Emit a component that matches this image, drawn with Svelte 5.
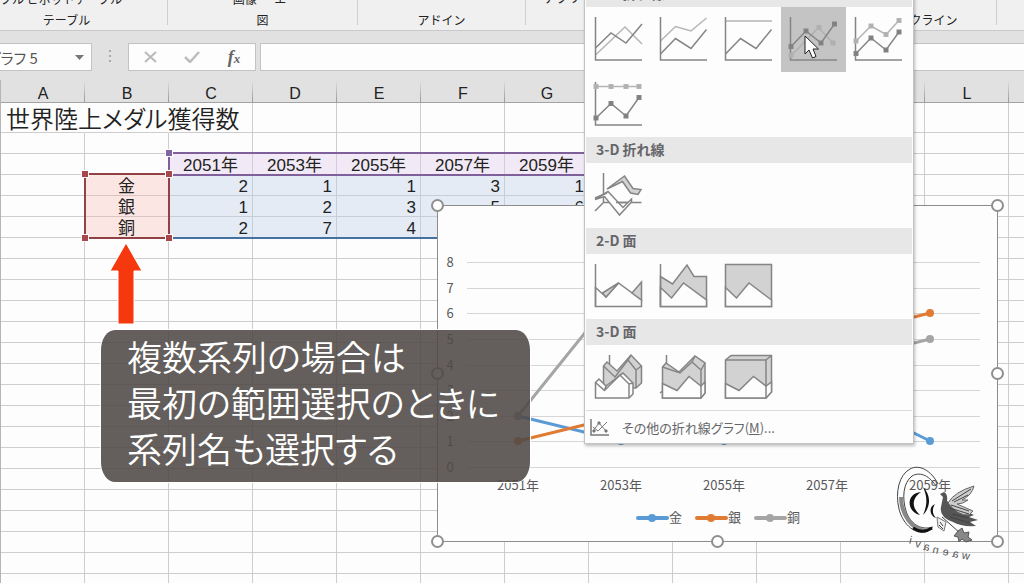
<script lang="ts">
  type Cell = { text: string; kind: string };

  const columns = ['A', 'B', 'C', 'D', 'E', 'F', 'G', 'H', 'I', 'J', 'K', 'L', 'M'];
  const years = ['2051年', '2053年', '2055年', '2057年', '2059年'];
  const medals = [
    { name: '金', color: '#5b9bd5', values: [2, 1, 1, 3, 1] },
    { name: '銀', color: '#e07b33', values: [1, 2, 3, 5, 6] },
    { name: '銅', color: '#a5a5a5', values: [2, 7, 4, 4, 5] },
  ];

  const rows: Cell[][] = Array.from({ length: 23 }, (_, r) =>
    columns.map((_, c) => cellAt(r, c))
  );

  function cellAt(r: number, c: number): Cell {
    if (r === 0 && c === 0) return { text: '世界陸上メダル獲得数', kind: 'title' };
    if (r === 2 && c >= 2 && c <= 6) return { text: years[c - 2], kind: 'year' };
    if (r >= 3 && r <= 5 && c === 1) return { text: medals[r - 3].name, kind: 'name' };
    if (r >= 3 && r <= 5 && c >= 2 && c <= 6) {
      return { text: String(medals[r - 3].values[c - 2]), kind: 'value' };
    }
    return { text: '', kind: r === 0 && c < 2 ? 'open' : '' };
  }

  // chart coordinates
  const xAt = (i: number) => 81 + i * 103;
  const yAt = (v: number) => Math.round(262 - v * 25.6);
  const pointsOf = (values: number[]) => values.map((v, i) => `${xAt(i)},${yAt(v)}`).join(' ');
  const handles = [[0, 0], [560, 0], [0, 168], [560, 168], [0, 336], [280, 336], [560, 336]];

  type Shape = { d: string; tone: string };
  type Icon = { label: string; shapes: Shape[]; dots?: { x: number; y: number; tone: string }[] };

  const axis: Shape = { d: 'M.5 0V43H47', tone: 'dark' };
  const dots = (tone: string, list: number[][]) => list.map(([x, y]) => ({ x, y, tone }));

  const lineIcons: Icon[] = [
    {
      label: '折れ線',
      shapes: [
        { d: 'M.5 38 30 10 47 27', tone: 'light' },
        { d: 'M.5 31 16 16 31 26 47 7', tone: 'dark' },
        axis,
      ],
    },
    {
      label: '積み上げ折れ線',
      shapes: [
        { d: 'M.5 24 15.5 9.5 31 14 46.5 1', tone: 'light' },
        { d: 'M.5 37 15.5 21.5 31 31.5 46.5 12.5', tone: 'dark' },
        axis,
      ],
    },
    {
      label: '100% 積み上げ折れ線',
      shapes: [
        { d: 'M.5 4H47', tone: 'light' },
        { d: 'M.5 37 15.5 21.5 31 31.5 46.5 12.5', tone: 'dark' },
        axis,
      ],
    },
    {
      label: 'マーカー付き折れ線',
      shapes: [
        { d: 'M1 39 28.5 10.5 43 26', tone: 'faint' },
        { d: 'M1 29.5 16 14 31 26 44.5 7', tone: 'dark' },
        axis,
      ],
      dots: [
        ...dots('faint', [[1, 38], [29, 10.5], [43, 26]]),
        ...dots('dark', [[1, 29.5], [16, 14], [31, 26], [44.5, 7]]),
      ],
    },
    {
      label: 'マーカー付き積み上げ折れ線',
      shapes: [
        { d: 'M1 24 16 9 31 17.5 44 3.5', tone: 'light' },
        { d: 'M1 36.5 16 21 31 33 44 15', tone: 'dark' },
        axis,
      ],
      dots: [
        ...dots('light', [[1, 24], [16, 9], [31, 17.5], [44, 3.5]]),
        ...dots('dark', [[1, 36.5], [16, 21], [31, 33], [44, 15]]),
      ],
    },
    {
      label: 'マーカー付き 100% 積み上げ折れ線',
      shapes: [
        { d: 'M1 4.5H44', tone: 'light' },
        { d: 'M1 36 16 21.5 31 34 44 15.5', tone: 'dark' },
        axis,
      ],
      dots: [
        ...dots('light', [[1, 4.5], [16, 4.5], [31, 4.5], [44, 4.5]]),
        ...dots('dark', [[1, 36], [16, 21.5], [31, 34], [44, 15.5]]),
      ],
    },
  ];

  const line3dIcons: Icon[] = [
    {
      label: '3-D 折れ線',
      shapes: [
        { d: 'M8.5 0V29.5H46.5M8.5 29.5 0 38', tone: 'dark' },
        { d: 'M12 16 29.5 3 38 15.5 46 16.5 43 21.5 35.5 20 27.5 8.5Z', tone: 'fill' },
        { d: 'M0 26.5 13 18.5 28 34.5 36.5 26V29L24.5 42 9.5 23.5Z', tone: 'paper' },
        { d: 'M21 29.5H33M0 25 12 20', tone: 'dark' },
      ],
    },
  ];

  const areaIcons: Icon[] = [
    {
      label: '面',
      shapes: [
        { d: 'M.5 23.5 11 33 23.5 19 46.5 36V42.5H.5Z', tone: 'paper' },
        { d: 'M7.5 29 23.5 19 11 33Z', tone: 'fill' },
        { d: 'M37 29 46.5 18V36Z', tone: 'fill' },
        { d: 'M.5 0V42.5', tone: 'dark' },
      ],
    },
    {
      label: '積み上げ面',
      shapes: [
        { d: 'M.5 12.5 12.5 20 27 1 34 12.5H46.5V42.5H.5Z', tone: 'fill' },
        { d: 'M.5 23.5 11.5 34 23.5 19 46.5 36V42.5H.5Z', tone: 'paper' },
        { d: 'M.5 0V42.5', tone: 'dark' },
      ],
    },
    {
      label: '100% 積み上げ面',
      shapes: [
        { d: 'M.5.5H46.5V42.5H.5Z', tone: 'fill' },
        { d: 'M.5 23.5 11.5 34 24 19 46.5 36V42.5H.5Z', tone: 'paper' },
      ],
    },
  ];

  const area3dIcons: Icon[] = [
    {
      label: '3-D 面',
      shapes: [
        { d: 'M14.5 0V9', tone: 'dark' },
        { d: 'M8.5 11 12 7 22 16 36 0 46.5 11V28L41 33H8.5Z', tone: 'fill' },
        { d: 'M8.5 11 20 22 33 5 41 15V33M33 5 36 0M41 15 46.5 11', tone: 'dark' },
        { d: 'M.5 27.5 4 24 11 31 28 18 38 28V39L34 43H.5Z', tone: 'paper' },
        { d: 'M.5 27.5 9.5 35.5 25 20 34 29V43M34 29 38 28M9.5 35.5 11 31M25 20 28 18', tone: 'dark' },
      ],
    },
    {
      label: '3-D 積み上げ面',
      shapes: [
        { d: 'M6.5 0V9M0 38 2.5 36', tone: 'dark' },
        { d: 'M2.5 12 6 8 19 17 35 1 45 8V38L41 43H2.5Z', tone: 'fill' },
        { d: 'M2.5 28.5 17 35.5 29 21.5 41 31 45 27V38L41 43H2.5Z', tone: 'paper' },
        { d: 'M2.5 12 20 18 32 7 41 15V43M32 7 35 1M41 15 45 8', tone: 'dark' },
      ],
    },
    {
      label: '3-D 100% 積み上げ面',
      shapes: [
        { d: 'M.5 5 6 .5H46.5V37L41 43H.5Z', tone: 'fill' },
        { d: 'M.5 28.5 14 35.5 28.5 21.5 41 31 46.5 27V37L41 43H.5Z', tone: 'paper' },
        { d: 'M.5 5H41V43M41 5 46.5 .5', tone: 'dark' },
      ],
    },
  ];

  const sections = [
    { title: '2-D 折れ線', icons: lineIcons },
    { title: '3-D 折れ線', icons: line3dIcons },
    { title: '2-D 面', icons: areaIcons },
    { title: '3-D 面', icons: area3dIcons },
  ];

  let active = $state('マーカー付き折れ線');
  let nameBox = $state('グラフ 5');
  let formula = $state('');

  const stamp = [
    { ch: 'i', x: 17, y: 80 },
    { ch: 'v', x: 26, y: 84 },
    { ch: 'a', x: 35, y: 87 },
    { ch: 'n', x: 44, y: 90 },
    { ch: 'e', x: 54, y: 92 },
    { ch: 'a', x: 64, y: 94 },
    { ch: 'w', x: 75, y: 96 },
  ];
</script>

<main class="app">
  <header class="ribbon">
    <div class="group tables"><span>ブル ピボットテーブル</span><b>テーブル</b></div>
    <div class="group pictures"><span>画像 ・ エ･</span><b>図</b></div>
    <div class="group addins"><b>アドイン</b></div>
    <div class="group charts"><span>アプリ</span></div>
    <div class="group sparklines"><b>スパークライン</b></div>
    <div class="group rest"></div>
  </header>

  <div class="formula-bar">
    <div class="name-box">
      <input type="text" aria-label="名前ボックス" bind:value={nameBox} />
      <button type="button" aria-label="名前の一覧">
        <svg width="9" height="5" viewBox="0 0 9 5"><path d="M0 0H9L4.5 5Z" fill="#777" /></svg>
      </button>
    </div>
    <svg class="grip" width="3" height="14" viewBox="0 0 3 14" fill="#a8a8a8">
      <path d="M0 0h2v2H0zM0 5h2v2H0zM0 10h2v2H0z" />
    </svg>
    <div class="commands">
      <button type="button" aria-label="キャンセル">
        <svg width="13" height="12" viewBox="0 0 13 12"><path d="M1 1 12 11M12 1 1 11" stroke="#b9b9b9" stroke-width="2" /></svg>
      </button>
      <button type="button" aria-label="入力">
        <svg width="16" height="12" viewBox="0 0 16 12"><path d="M1 6 6 11 15 1" fill="none" stroke="#bdbdbd" stroke-width="2.5" /></svg>
      </button>
      <button type="button" class="fx" aria-label="関数の挿入">f<small>x</small></button>
    </div>
    <input class="formula" type="text" aria-label="数式バー" bind:value={formula} />
  </div>

  <div class="sheet">
    <table>
      <thead>
        <tr>
          {#each columns as column}
            <th>{column}</th>
          {/each}
        </tr>
      </thead>
      <tbody>
        {#each rows as row}
          <tr>
            {#each row as cell}
              <td class={cell.kind}>{cell.text}</td>
            {/each}
          </tr>
        {/each}
      </tbody>
    </table>
    <div class="range values"></div>
    <div class="range categories"><i></i></div>
    <div class="range names"><i></i><i></i><i></i><i></i></div>
  </div>

  <svg class="chart" width="561" height="337" viewBox="0 0 561 337" role="img" aria-label="折れ線グラフ">
    <rect x="0.5" y="0.5" width="560" height="336" fill="#fdfdfd" stroke="#8c8c8c" />
    {#each [0, 1, 2, 3, 4, 5, 6, 7, 8] as tick}
      <path d="M30 {yAt(tick)}.5H543" stroke="#d6d6d6" />
      <text x="13" y={yAt(tick) + 5} text-anchor="middle">{tick}</text>
    {/each}
    {#each years as year, i}
      <text x={xAt(i)} y="285" text-anchor="middle">{year}</text>
    {/each}
    {#each medals as medal, i}
      <polyline points={pointsOf(medal.values)} fill="none" stroke={medal.color} stroke-width="3" />
      {#each medal.values as value, n}
        <circle cx={xAt(n)} cy={yAt(value)} r="4" fill={medal.color} />
      {/each}
      <path d="M{201 + i * 59} 313H{230 + i * 59}" stroke={medal.color} stroke-width="4" stroke-linecap="round" />
      <circle cx={215 + i * 59} cy="313" r="4" fill={medal.color} />
      <text x={232 + i * 59} y="317">{medal.name}</text>
    {/each}
    {#each handles as [x, y]}
      <circle cx={x + 0.5} cy={y + 0.5} r="5.5" fill="#fff" stroke="#8f8f8f" stroke-width="2" />
    {/each}
  </svg>

  <svg class="stamp" width="92" height="104" viewBox="0 0 92 104" aria-hidden="true">
    <g fill="none" stroke="#444">
      <path d="M46 20C39 6 27 0 18 5C7 11 3 28 7 45C11 61 24 72 36 67" stroke-width="1" />
      <path d="M44 22C36 10 27 8 20 12C11 19 10 34 14 47C18 59 28 67 41 63" stroke-width="1" />
      <path d="M9 33C9 50 20 66 34 67" stroke="#888" stroke-width="4" />
      <path d="M21 64C27 68 34 68 40 64" stroke="#111" stroke-width="3" />
    </g>
    <path d="M29 28C14 29 14 48 28 51C20 44 19 35 29 28ZM31 23C40 32 38 44 31 51C35 42 36 34 31 23ZM43 40C36 43 38 52 44 54C40 50 40 45 43 40Z" fill="#111" />
    <path d="M51 33 48 30 52 28Q56 30 55 37L65 44Q76 48 82 51L77 53 86 56 78 58 84 62Q69 63 61 58Q47 53 49 43Z" fill="#555" />
    <path d="M56 39Q62 28 82 22Q80 31 70 36L76 36Q71 40 65 40L81 47 77 51Q66 52 56 39Z" fill="#ccc" stroke="#666" />
    <path d="M60 37 79 25M62 38 76 31M59 41 77 47M58 44 77 50M60 50 77 54M58 53 78 59" stroke="#444" fill="none" />
    <path d="M45 53 54 58 52 67 46 63Z" fill="#eee" stroke="#777" />
    <path d="M48 58 51 62M47 61 51 65M50 53 68 69" stroke="#444" />
    <path d="M66 67 70 64 72 69 77 68 76 73 80 76 74 78 70 75 67 78 66 73 62 72Z" fill="#888" stroke="#555" />
    {#each stamp as letter}
      <text transform="translate({letter.x + 2} {letter.y}) rotate(12) scale(-1 1)">{letter.ch}</text>
    {/each}
  </svg>

  <svg class="arrow" width="34" height="83" viewBox="0 0 34 83" aria-hidden="true">
    <path d="M17 1 33 29H25V82H9V29H1Z" fill="#f6380f" stroke="#fff" />
  </svg>

  <p class="callout">複数系列の場合は<br />最初の範囲選択のときに<br />系列名も選択する</p>

  <div class="menu" role="menu">
    {#each sections as section}
      <h2>{section.title}</h2>
      <div class="gallery">
        {#each section.icons as icon}
          <button
            type="button"
            role="menuitem"
            aria-label={icon.label}
            class:active={active === icon.label}
            onclick={() => (active = icon.label)}
          >
            <svg width="48" height="44" viewBox="0 0 48 44">
              {#each icon.shapes as shape}
                <path d={shape.d} class={shape.tone} />
              {/each}
              {#each icon.dots ?? [] as dot}
                <rect x={dot.x - 2} y={dot.y - 2} width="4" height="4" class="dot {dot.tone}" />
              {/each}
            </svg>
          </button>
        {/each}
      </div>
    {/each}
    <button type="button" role="menuitem" class="more">
      <svg width="20" height="17" viewBox="0 0 20 17" fill="none" stroke="#777">
        <path d="M1 0V16H19" stroke-width="1.5" />
        <path d="M3 12 9 4 16 12M3 8 8 12 17 3" />
        <path d="M8 3h2v2H8zM15 11h2v2h-2zM3 11h2v2H3z" fill="#777" />
      </svg>
      <span>その他の折れ線グラフ(<u>M</u>)...</span>
    </button>
  </div>

  <svg class="pointer" width="16" height="25" viewBox="0 0 16 25" aria-hidden="true">
    <path d="M1 1V19L5 15 8.5 23 12 21.5 9 14H14.5Z" fill="#fff" stroke="#222" />
  </svg>
</main>

<style>
  .app {
    position: relative;
    height: 100vh;
    overflow: hidden;
    background: #e1e1e1;
    color: #222;
    font-family: 'Noto Sans CJK JP', sans-serif;
  }

  button,
  input {
    box-sizing: border-box;
    margin: 0;
    padding: 0;
    border: 0;
    background: none;
    color: inherit;
    font: inherit;
  }

  .ribbon {
    display: flex;
    height: 30px;
    background: #f0f0f0;
    border-bottom: 1px solid #c9c9c9;
    font-size: 12px;
    line-height: 20px;
  }

  .group {
    display: flex;
    flex-direction: column;
    justify-content: flex-end;
    align-items: center;
    box-sizing: border-box;
    height: 25px;
    border-right: 1px solid #cfcfcf;
    white-space: nowrap;
  }

  .group b {
    font-weight: 400;
    height: 20px;
    margin-bottom: -5px;
  }

  .group span {
    height: 20px;
    margin-bottom: 1px;
  }

  .tables {
    width: 168px;
    padding-right: 34px;
  }

  .tables span {
    align-self: flex-start;
  }

  .pictures {
    width: 190px;
  }

  .addins {
    width: 168px;
  }

  .charts {
    width: 309px;
    align-items: flex-start;
    padding-left: 18px;
  }

  .charts span {
    margin-bottom: 17px;
  }

  .sparklines {
    width: 162px;
  }

  .rest {
    flex: 1;
    border: 0;
  }

  .formula-bar {
    display: flex;
    align-items: center;
    height: 28px;
    padding: 12px 0 9px;
  }

  .name-box,
  .commands,
  .formula {
    box-sizing: border-box;
    height: 28px;
    background: #fdfdfd;
    border: 1px solid #c3c3c3;
  }

  .name-box {
    display: flex;
    width: 106px;
    margin-left: -14px;
    font-size: 15px;
    color: #555;
  }

  .name-box input {
    flex: 1;
    min-width: 0;
    font-feature-settings: 'palt';
  }

  .name-box button {
    display: flex;
    align-items: center;
    justify-content: center;
    width: 24px;
  }

  .grip {
    margin: 0 16px 0 17px;
  }

  .commands {
    display: grid;
    grid-template-columns: repeat(3, 1fr);
    width: 128px;
    margin-right: 4px;
  }

  .commands button {
    display: flex;
    align-items: center;
    justify-content: center;
  }

  .commands .fx {
    color: #666;
    font: italic bold 18px 'Liberation Serif', serif;
  }

  .fx small {
    font-size: 13px;
    padding-top: 4px;
  }

  .formula {
    flex: 1;
    min-width: 0;
    border-right: 0;
  }

  .sheet {
    position: relative;
    border-left: 1px solid #b5b5b5;
    font-family: 'Liberation Sans', 'Noto Sans CJK JP', sans-serif;
  }

  table {
    width: 1092px;
    table-layout: fixed;
    border-collapse: separate;
    border-spacing: 0;
    background: #fdfdfd;
  }

  th,
  td {
    box-sizing: border-box;
    padding: 0;
    white-space: nowrap;
  }

  th {
    height: 23px;
    padding-top: 5px;
    background: linear-gradient(#e1e1e1, #999) right / 1px 100% no-repeat #e1e1e1;
    border-bottom: 1px solid #a3a3a3;
    font-size: 16px;
    font-weight: 400;
    line-height: 17px;
  }

  td {
    height: 21px;
    border-right: 1px solid #cdcdcd;
    border-bottom: 1px solid #cdcdcd;
    font-size: 17px;
    line-height: 20px;
  }

  tbody tr:first-child td {
    height: 30px;
  }

  td.title {
    padding-left: 5px;
    border-right-color: transparent;
    font-family: 'Noto Sans CJK JP', sans-serif;
    font-size: 24px;
    font-weight: 350;
    line-height: 29px;
    font-feature-settings: 'palt';
  }

  td.open {
    border-right-color: transparent;
  }

  td.year,
  td.name,
  td.value {
    padding-top: 4px;
    line-height: 16px;
  }

  td.year,
  td.name {
    text-align: center;
  }

  td.year {
    background: #f1e9f5;
    border-right-color: #d5cadb;
  }

  td.name {
    background: #fbe6e4;
    border-bottom-color: #d8c4c3;
  }

  td.value {
    padding-right: 4px;
    background: #e4ebf5;
    border-color: #c6ced8;
    text-align: right;
  }

  .range {
    position: absolute;
    box-sizing: border-box;
    border: 2px solid;
  }

  .range i {
    position: absolute;
    width: 6px;
    height: 6px;
    border: 1px solid #fff;
    background: #a8484d;
  }

  .categories {
    left: 167px;
    top: 72px;
    width: 422px;
    height: 24px;
    border-color: #80609a;
  }

  .values {
    left: 167px;
    top: 94px;
    width: 422px;
    height: 65px;
    border-color: #44719f;
  }

  .names {
    left: 83px;
    top: 93px;
    width: 86px;
    height: 66px;
    border-color: #914247;
  }

  .range i:nth-child(1) {
    left: -5px;
    top: -5px;
  }

  .range i:nth-child(2) {
    right: -5px;
    top: -5px;
  }

  .range i:nth-child(3) {
    left: -5px;
    bottom: -5px;
  }

  .range i:nth-child(4) {
    right: -5px;
    bottom: -5px;
  }

  .categories i {
    background: #8064a2;
  }

  .chart {
    position: absolute;
    left: 437px;
    top: 205px;
    overflow: visible;
    font-size: 13px;
    fill: #595959;
  }

  .stamp {
    position: absolute;
    left: 892px;
    top: 464px;
    fill: #555;
    font: 11px 'Liberation Sans', sans-serif;
  }

  .arrow {
    position: absolute;
    left: 109px;
    top: 242px;
  }

  .callout {
    position: absolute;
    left: 101px;
    top: 330px;
    box-sizing: border-box;
    width: 429px;
    height: 152px;
    margin: 0;
    padding: 3px 26px;
    border-radius: 14px / 20px;
    background: rgba(79, 73, 69, 0.88);
    box-shadow: 0 0 0 1px #fff;
    color: #fff;
    font-size: 35px;
    font-weight: 350;
    line-height: 46px;
    font-feature-settings: 'palt';
    white-space: nowrap;
  }

  .menu {
    position: absolute;
    left: 584px;
    top: -19px;
    box-sizing: border-box;
    width: 330px;
    padding: 0 1px;
    background: #fdfdfd;
    border: 1px solid #c3c3c3;
    border-top: 0;
    box-shadow: 1px 2px 3px rgba(0, 0, 0, 0.25);
    color: #66666a;
  }

  h2 {
    height: 26px;
    margin: 0;
    padding-left: 10px;
    background: #e7e7e7;
    font-size: 14px;
    font-weight: 700;
    line-height: 24px;
  }

  .gallery {
    display: flex;
    flex-wrap: wrap;
  }

  .gallery button {
    width: 65px;
    height: 65px;
    padding: 10px 8px 11px 9px;
    line-height: 0;
  }

  .gallery button.active {
    background: #c4c4c4;
  }

  .gallery svg {
    overflow: visible;
  }

  .gallery path {
    fill: none;
    stroke-width: 1.5;
  }

  .gallery .dark {
    stroke: #858585;
  }

  .gallery .light {
    stroke: #b5b5b5;
  }

  .gallery .faint {
    stroke: #b0b0b0;
  }

  .gallery .fill {
    fill: #d2d2d2;
    stroke: #858585;
  }

  .gallery .paper {
    fill: #fdfdfd;
    stroke: #858585;
  }

  .gallery .dot.dark {
    fill: #808080;
  }

  .gallery .dot.light,
  .gallery .dot.faint {
    fill: #b0b0b0;
  }

  .more {
    display: flex;
    align-items: center;
    gap: 12px;
    width: 100%;
    height: 33px;
    padding-left: 4px;
    border-top: 1px solid #dcdcdc;
    font-size: 13px;
    font-feature-settings: 'palt';
  }

  .pointer {
    position: absolute;
    left: 804px;
    top: 35px;
  }
</style>
